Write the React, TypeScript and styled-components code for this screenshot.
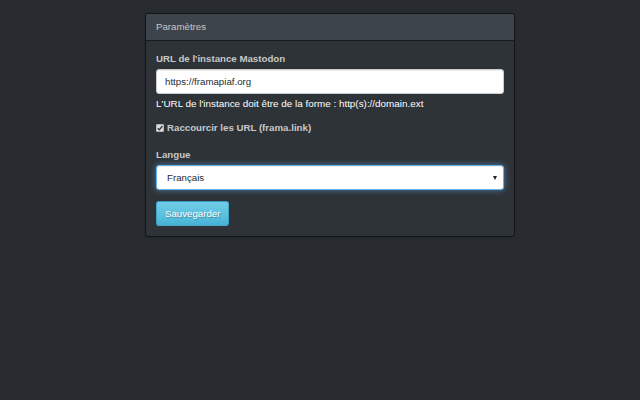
import React from "react";
import styled, { createGlobalStyle } from "styled-components";

const Global = createGlobalStyle`
  html, body { margin: 0; padding: 0; }
  body {
    background: #272b30;
    font-family: "Liberation Sans", Arial, Helvetica, sans-serif;
    font-size: 9.7px;
    line-height: 14px;
    color: #c8c8c8;
    height: 400px;
  }
  * { box-sizing: border-box; }
`;

const Page = styled.div`
  padding: 13px 0 0 145px;
`;

const Panel = styled.div`
  width: 370px;
  background: #2e3338;
  border: 1px solid rgba(0, 0, 0, 0.6);
  border-radius: 3px;
  box-shadow: 0 1px 1px rgba(0, 0, 0, 0.05);
`;

const PanelHeading = styled.div`
  background: #3e444c;
  color: #c8c8c8;
  padding: 6px 10px;
  line-height: 14px;
  border-bottom: 1px solid rgba(0, 0, 0, 0.6);
  border-radius: 2px 2px 0 0;
`;

const PanelBody = styled.form`
  padding: 11px 10px 10px 10px;
  display: flex;
  flex-direction: column;
`;

const FormGroup = styled.div<{ $mb: number }>`
  display: flex;
  flex-direction: column;
  margin-bottom: ${(p) => p.$mb}px;
`;

const Label = styled.label`
  font-weight: bold;
  color: #c8c8c8;
  margin-bottom: 3px;
  line-height: 14px;
`;

const TextInput = styled.input`
  height: 25px;
  width: 100%;
  border: 1px solid #ccc;
  border-radius: 3px;
  background: #fff;
  color: #272b30;
  padding: 0 8px;
  font-family: inherit;
  font-size: 9.7px;
  outline: none;
  box-shadow: inset 0 1px 1px rgba(0, 0, 0, 0.075);
`;

const Help = styled.div`
  color: #ffffff;
  font-size: 9.9px;
  margin-top: 3px;
  line-height: 14px;
`;

const CheckRow = styled.label`
  display: flex;
  align-items: center;
  gap: 3px;
  font-weight: bold;
  color: #c8c8c8;
  line-height: 14px;
  margin-bottom: 13px;
`;

const CheckBox = styled.span`
  width: 8px;
  height: 8px;
  border-radius: 1px;
  background: #dcdcdc;
  border: 1px solid #b5b5b5;
  display: flex;
  align-items: center;
  justify-content: center;
`;

const SelectWrap = styled.div`
  position: relative;
  height: 25px;
  width: 100%;
  border: 1px solid #66afe9;
  border-radius: 3px;
  background: #fff;
  box-shadow: inset 0 1px 1px rgba(0, 0, 0, 0.075),
    0 0 6px rgba(102, 175, 233, 0.6);
`;

const Select = styled.select`
  appearance: none;
  -webkit-appearance: none;
  width: 100%;
  height: 100%;
  border: none;
  background: transparent;
  color: #272b30;
  font-family: inherit;
  font-size: 9.7px;
  padding: 0 10px;
  outline: none;
`;

const Caret = styled.span`
  position: absolute;
  right: 6px;
  top: 10px;
  width: 0;
  height: 0;
  border-left: 2.5px solid transparent;
  border-right: 2.5px solid transparent;
  border-top: 4px solid #222;
  pointer-events: none;
`;

const Button = styled.button`
  align-self: flex-start;
  height: 25px;
  padding: 0 8px;
  font-family: inherit;
  font-size: 9.7px;
  color: #fff;
  text-shadow: 1px 1px 1px rgba(0, 0, 0, 0.3);
  border: 1px solid rgba(40, 140, 180, 0.55);
  border-radius: 3px;
  background-image: linear-gradient(#70cce8, #5bc0de 60%, #46b3d5);
  cursor: pointer;
`;

export default function App() {
  return (
    <>
      <Global />
      <Page>
        <Panel>
          <PanelHeading>Paramètres</PanelHeading>
          <PanelBody onSubmit={(e) => e.preventDefault()}>
            <FormGroup $mb={10}>
              <Label htmlFor="url">URL de l'instance Mastodon</Label>
              <TextInput id="url" defaultValue="https://framapiaf.org" />
              <Help>L'URL de l'instance doit être de la forme : http(s)://domain.ext</Help>
            </FormGroup>
            <CheckRow>
              <CheckBox>
                <svg width="6" height="6" viewBox="0 0 6 6">
                  <path d="M0.8 3.2 L2.4 4.8 L5.3 1.0" fill="none" stroke="#333" strokeWidth="1.3" />
                </svg>
              </CheckBox>
              Raccourcir les URL (frama.link)
            </CheckRow>
            <FormGroup $mb={11}>
              <Label htmlFor="lang">Langue</Label>
              <SelectWrap>
                <Select id="lang" defaultValue="fr">
                  <option value="fr">Français</option>
                  <option value="en">English</option>
                </Select>
                <Caret />
              </SelectWrap>
            </FormGroup>
            <Button type="submit">Sauvegarder</Button>
          </PanelBody>
        </Panel>
      </Page>
    </>
  );
}
